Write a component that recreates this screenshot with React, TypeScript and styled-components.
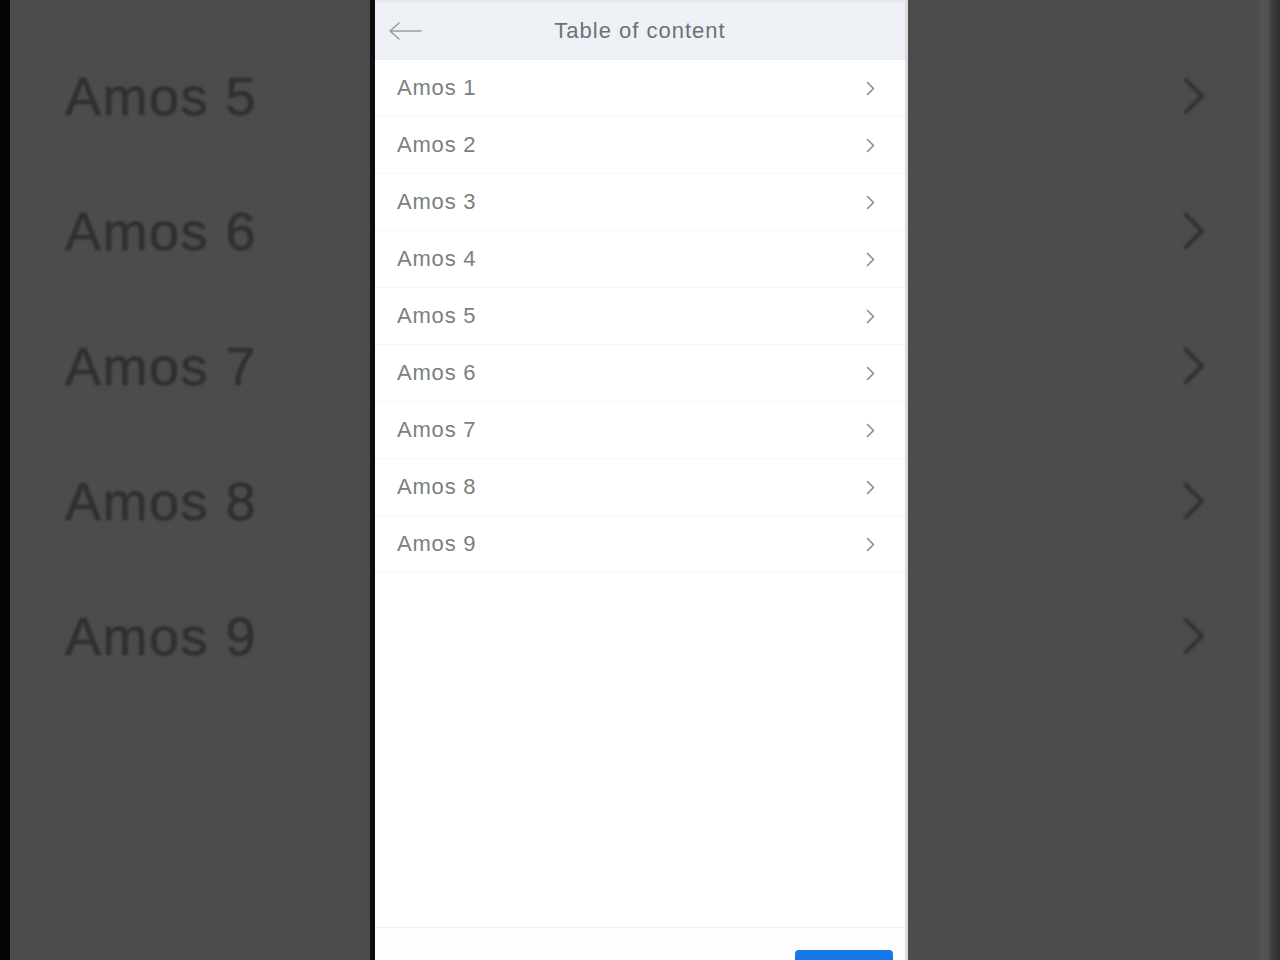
import styled, { createGlobalStyle } from "styled-components";

const GlobalStyle = createGlobalStyle`
  html, body {
    margin: 0;
    padding: 0;
    background: #4c4c4c;
  }
  body {
    font-family: "Liberation Sans", Arial, sans-serif;
  }
`;

const chapters = Array.from({ length: 9 }, (_, i) => `Amos ${i + 1}`);
const backdropChapters = [5, 6, 7, 8, 9].map((n) => `Amos ${n}`);

export default function App() {
  return (
    <>
      <GlobalStyle />
      <Screen>
        <Backdrop>
          {backdropChapters.map((name) => (
            <BackdropRow key={name}>
              <BackdropLabel>{name}</BackdropLabel>
              <Chevron size={40} color="#333333" weight={4.5} />
            </BackdropRow>
          ))}
        </Backdrop>
        <RightEdge />
        <Sheet>
          <Header>
            <BackButton aria-label="Back">
              <svg width="36" height="20" viewBox="0 0 36 20">
                <path
                  d="M12 2 L3 10 L12 18 M3 10 H34"
                  fill="none"
                  stroke="#9a9fa3"
                  strokeWidth="1.6"
                  strokeLinecap="round"
                  strokeLinejoin="round"
                />
              </svg>
            </BackButton>
            <Title>Table of content</Title>
          </Header>
          <List>
            {chapters.map((name) => (
              <Row key={name}>
                <RowLabel>{name}</RowLabel>
                <Chevron size={15} color="#8a8d8f" weight={1.6} />
              </Row>
            ))}
          </List>
          <Footer>
            <PrimaryButton />
          </Footer>
        </Sheet>
      </Screen>
    </>
  );
}

const Chevron = ({
  size,
  color,
  weight,
}: {
  size: number;
  color: string;
  weight: number;
}) => (
  <svg width={size * 0.6} height={size} viewBox="0 0 12 20">
    <path
      d="M2 2 L10 10 L2 18"
      fill="none"
      stroke={color}
      strokeWidth={(weight * 20) / size}
      strokeLinecap="round"
      strokeLinejoin="round"
    />
  </svg>
);

const Screen = styled.div`
  position: relative;
  width: 1280px;
  height: 960px;
  overflow: hidden;
  background: #4c4c4c;
  border-left: 10px solid #050505;
  box-sizing: border-box;
`;

const Backdrop = styled.div`
  display: flex;
  flex-direction: column;
  padding: 28px 0 0 55px;
  filter: blur(1px);
`;

const BackdropRow = styled.div`
  display: flex;
  align-items: center;
  justify-content: space-between;
  height: 135px;
  padding-right: 74px;
`;

const BackdropLabel = styled.span`
  font-size: 54px;
  letter-spacing: 1.5px;
  color: #303030;
  -webkit-text-stroke: 0.6px #303030;
`;

const RightEdge = styled.div`
  position: absolute;
  top: 0;
  right: 0;
  width: 22px;
  height: 100%;
  background: linear-gradient(
    to right,
    #4c4c4c 0,
    #545454 4px,
    #505050 10px,
    #3c3c3c 14px,
    #2e2e2e 22px
  );
`;

const Sheet = styled.div`
  position: absolute;
  top: 0;
  left: 360px;
  width: 538px;
  height: 960px;
  display: flex;
  flex-direction: column;
  background: #ffffff;
  border-left: 5px solid #0d0d0d;
  border-right: 3px solid #dcdcdc;
  box-sizing: border-box;
`;

const Header = styled.div`
  position: relative;
  display: flex;
  align-items: center;
  justify-content: center;
  height: 60px;
  padding-top: 3px;
  flex-shrink: 0;
  box-sizing: border-box;
  background: linear-gradient(to bottom, #e3e7ee 0, #eef1f6 4px, #edf0f5 100%);
  border-bottom: 1px solid #eceef2;
`;

const BackButton = styled.div`
  position: absolute;
  left: 12px;
  top: 21px;
  display: flex;
`;

const Title = styled.h1`
  margin: 0;
  font-size: 22px;
  font-weight: 400;
  letter-spacing: 1px;
  color: #6d7274;
`;

const List = styled.div`
  display: flex;
  flex-direction: column;
  flex: 1;
`;

const Row = styled.div`
  display: flex;
  align-items: center;
  justify-content: space-between;
  height: 57px;
  padding: 0 30px 0 22px;
  border-bottom: 1px solid #f8f8f8;
  box-sizing: border-box;
`;

const RowLabel = styled.span`
  font-size: 22px;
  letter-spacing: 0.8px;
  color: #7b7f80;
`;

const Footer = styled.div`
  display: flex;
  justify-content: flex-end;
  height: 33px;
  flex-shrink: 0;
  padding-right: 12px;
  border-top: 1px solid #f0f0f0;
  background: #fdfdfd;
  box-sizing: border-box;
`;

const PrimaryButton = styled.div`
  width: 98px;
  height: 40px;
  margin-top: 22px;
  border-radius: 4px;
  background: #1877e6;
`;
